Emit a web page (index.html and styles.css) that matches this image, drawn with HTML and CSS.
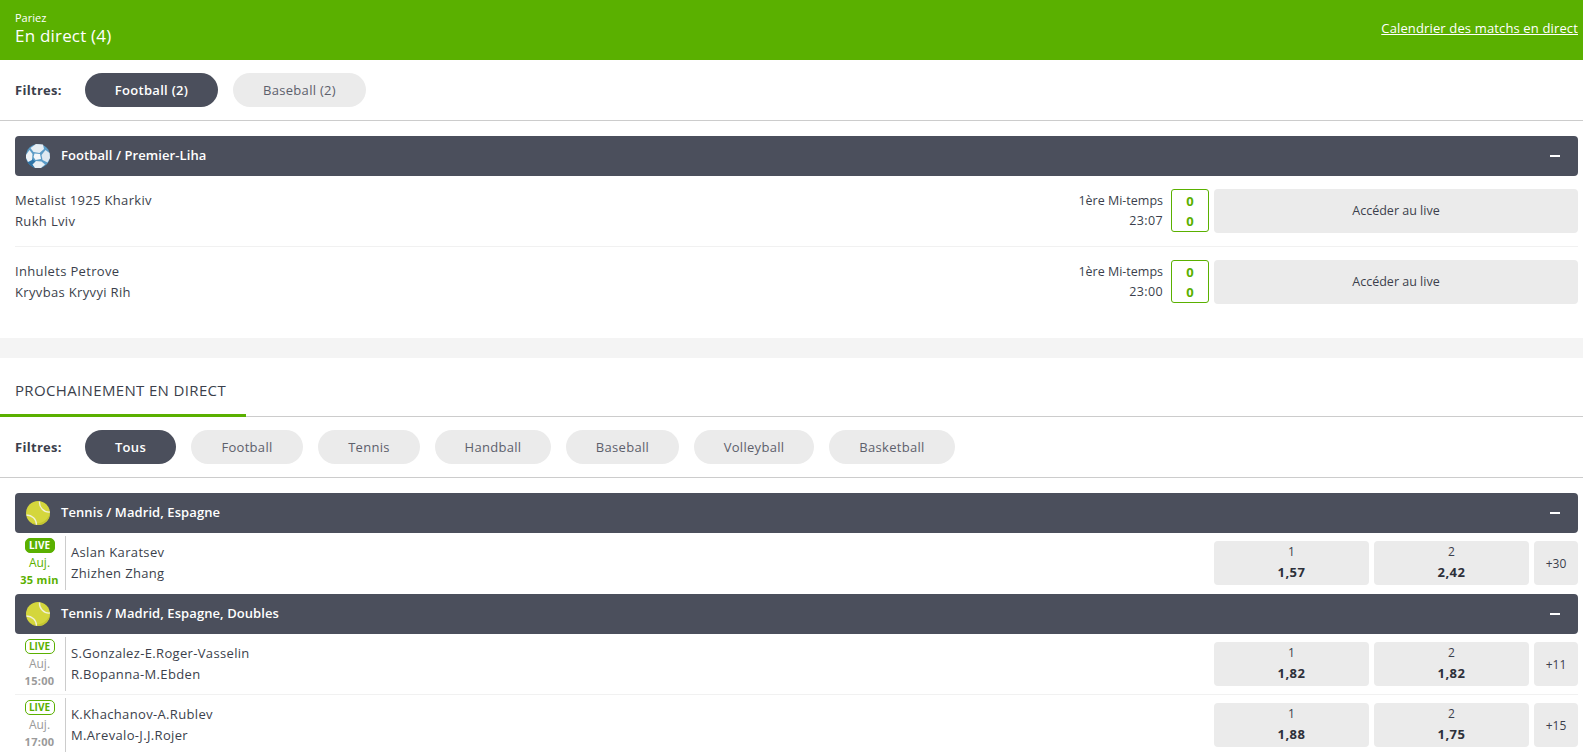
FILE: index.html
```html
<!DOCTYPE html>
<html lang="fr">
<head>
    <meta charset="UTF-8">
    <meta name="viewport" content="width=device-width, initial-scale=1.0">
    <title>Pariez en direct</title>
    <link rel="stylesheet" href="styles.css">
</head>
<body>
    <svg class="defs" width="0" height="0">
        <symbol id="ball-foot" viewBox="0 0 24 24">
            <circle cx="12" cy="12" r="12" fill="#5a9bc6"/>
            <path d="M0 12A12 12 0 0 0 12 24L17 23 6 15Z" fill="#2f75a8"/>
            <path d="M4.500 4 10 0.100 17 0.500 18 5 13.500 9 7.500 8Z" fill="#e6eef4"/>
            <path d="M0 11 3.500 6 6.500 10 6 16 2 18 0 14Z" fill="#eef3f7"/>
            <path d="M15.500 11 19.500 6 23.500 9 24 14 21.500 18.500 16.500 16Z" fill="#dfe9f1"/>
            <path d="M6.500 20.500 10 17 15.500 17.500 19 20.500 15 24 9 24Z" fill="#e8eff4"/>
            <path d="M8.500 9.500 14 10 15 15 9.500 16 7.500 13Z" fill="#f4f7fa"/>
        </symbol>
        <symbol id="ball-tennis" viewBox="0 0 24 24">
            <circle cx="12" cy="12" r="12" fill="#d4d63c"/>
            <path d="M12 24A12 12 0 0 0 24 12 14 14 0 0 1 4 21 12 12 0 0 0 12 24Z" fill="#c3c532"/>
            <path d="M13.500 0.500C13 6 17.500 11.500 23.800 11" fill="none" stroke="#f1f1d8" stroke-width="1.300"/>
            <path d="M0.500 14C6 14 10.500 18 10.500 23.800" fill="none" stroke="#f1f1d8" stroke-width="1.300"/>
        </symbol>
    </svg>

    <div class="top-bar">
        <div>
            <div class="top-small">Pariez</div>
            <div class="top-title">En direct (4)</div>
        </div>
        <a class="top-link" href="#">Calendrier des matchs en direct</a>
    </div>

    <div class="filters">
        <span class="filters-label">Filtres:</span>
        <button class="pill active w133">Football (2)</button>
        <button class="pill w133">Baseball (2)</button>
    </div>

    <div class="section">
        <div class="league">
            <svg class="league-icon"><use href="#ball-foot"/></svg>
            <span class="league-name">Football / Premier-Liha</span>
            <span class="collapse"></span>
        </div>
        <div class="live-row">
            <div class="names">
                <div>Metalist 1925 Kharkiv</div>
                <div>Rukh Lviv</div>
            </div>
            <div class="status">
                <div>1ère Mi-temps</div>
                <div class="clock">23:07</div>
            </div>
            <div class="score"><div>0</div><div>0</div></div>
            <button class="go-live">Accéder au live</button>
        </div>
        <div class="live-row">
            <div class="names">
                <div>Inhulets Petrove</div>
                <div>Kryvbas Kryvyi Rih</div>
            </div>
            <div class="status">
                <div>1ère Mi-temps</div>
                <div class="clock">23:00</div>
            </div>
            <div class="score"><div>0</div><div>0</div></div>
            <button class="go-live">Accéder au live</button>
        </div>
    </div>

    <div class="band"></div>

    <div class="tabs">
        <div class="tab">PROCHAINEMENT EN DIRECT</div>
    </div>

    <div class="filters">
        <span class="filters-label">Filtres:</span>
        <button class="pill active w91">Tous</button>
        <button class="pill w112">Football</button>
        <button class="pill w102">Tennis</button>
        <button class="pill w116">Handball</button>
        <button class="pill w113">Baseball</button>
        <button class="pill w120">Volleyball</button>
        <button class="pill w126">Basketball</button>
    </div>

    <div class="section">
        <div class="league">
            <svg class="league-icon"><use href="#ball-tennis"/></svg>
            <span class="league-name">Tennis / Madrid, Espagne</span>
            <span class="collapse"></span>
        </div>
        <div class="event-row">
            <div class="when now">
                <span class="live-tag filled">LIVE</span>
                <div class="when-day">Auj.</div>
                <div class="when-time">35 min</div>
            </div>
            <div class="names event-names">
                <div>Aslan Karatsev</div>
                <div>Zhizhen Zhang</div>
            </div>
            <button class="odd"><span>1</span><b>1,57</b></button>
            <button class="odd"><span>2</span><b>2,42</b></button>
            <button class="more">+30</button>
        </div>

        <div class="league">
            <svg class="league-icon"><use href="#ball-tennis"/></svg>
            <span class="league-name">Tennis / Madrid, Espagne, Doubles</span>
            <span class="collapse"></span>
        </div>
        <div class="event-row">
            <div class="when">
                <span class="live-tag">LIVE</span>
                <div class="when-day">Auj.</div>
                <div class="when-time">15:00</div>
            </div>
            <div class="names event-names">
                <div>S.Gonzalez-E.Roger-Vasselin</div>
                <div>R.Bopanna-M.Ebden</div>
            </div>
            <button class="odd"><span>1</span><b>1,82</b></button>
            <button class="odd"><span>2</span><b>1,82</b></button>
            <button class="more">+11</button>
        </div>
        <div class="event-row">
            <div class="when">
                <span class="live-tag">LIVE</span>
                <div class="when-day">Auj.</div>
                <div class="when-time">17:00</div>
            </div>
            <div class="names event-names">
                <div>K.Khachanov-A.Rublev</div>
                <div>M.Arevalo-J.J.Rojer</div>
            </div>
            <button class="odd"><span>1</span><b>1,88</b></button>
            <button class="odd"><span>2</span><b>1,75</b></button>
            <button class="more">+15</button>
        </div>
    </div>
</body>
</html>
```

FILE: styles.css
```css
html, body {
    height: 754px;
    overflow: hidden;
}
body {
    margin: 0;
    background-color: #fff;
    color: #3b3f4c;
    font-family: "Open Sans", Arial, sans-serif;
    font-size: 13px;
}
button {
    font-family: inherit;
    border: none;
    padding: 0;
    cursor: pointer;
}
.defs {
    position: absolute;
}
.top-bar {
    height: 60px;
    box-sizing: border-box;
    padding: 11px 5px 0 15px;
    display: flex;
    justify-content: space-between;
    background-color: #5ab000;
    color: #fff;
}
.top-small {
    font-size: 11px;
    line-height: 14px;
}
.top-title {
    font-size: 17px;
    letter-spacing: 0.2px;
    line-height: 22px;
}
.top-link {
    color: #fff;
    font-weight: 500;
    font-size: 13px;
    letter-spacing: 0.14px;
    line-height: 34px;
}
.filters {
    height: 61px;
    box-sizing: border-box;
    padding-left: 15px;
    display: flex;
    align-items: center;
    gap: 15px;
    border-bottom: 1px solid #ccc;
}
.filters-label {
    width: 55px;
    font-weight: 700;
    font-size: 13px;
    letter-spacing: 0.3px;
}
.pill {
    height: 34px;
    border-radius: 17px;
    background-color: #ebebeb;
    color: #5d606b;
    font-size: 13px;
    letter-spacing: 0.3px;
}
.pill.active {
    background-color: #4b4f5c;
    color: #fff;
    font-weight: 600;
}
.w133 { width: 133px; }
.w91 { width: 91px; }
.w112 { width: 112px; }
.w102 { width: 102px; }
.w116 { width: 116px; }
.w113 { width: 113px; }
.w120 { width: 120px; }
.w126 { width: 126px; }
.section {
    margin: 15px 5px 0 15px;
}
.league {
    height: 40px;
    box-sizing: border-box;
    padding: 0 18px 0 11px;
    display: flex;
    align-items: center;
    border-radius: 4px;
    background-color: #4b4f5c;
    color: #fff;
}
.league-icon {
    width: 24px;
    height: 24px;
}
.league-name {
    margin: 0 0 2px 11px;
    flex: 1;
    font-weight: 600;
    font-size: 13px;
    letter-spacing: 0.08px;
}
.collapse {
    width: 10px;
    height: 2px;
    background-color: #fff;
}
.live-row {
    height: 71px;
    box-sizing: border-box;
    padding-top: 13px;
    display: flex;
    align-items: flex-start;
    border-bottom: 1px solid #f1f1f1;
}
.live-row:last-child {
    border-bottom: none;
    height: 91px;
}
.names {
    flex: 1;
    line-height: 21px;
    padding-top: 1px;
    letter-spacing: 0.34px;
}
.status {
    text-align: right;
    line-height: 20px;
    padding-top: 2px;
    margin-right: 8px;
    font-size: 12.500px;
}
.clock {
    letter-spacing: 0.4px;
}
.score {
    width: 38px;
    height: 43px;
    box-sizing: border-box;
    margin-right: 5px;
    border: 1px solid #5ab000;
    border-radius: 3px;
    color: #5ab000;
    font-weight: 700;
    text-align: center;
    line-height: 20px;
    padding-top: 1px;
}
.go-live {
    width: 364px;
    height: 44px;
    padding-bottom: 2px;
    border-radius: 4px;
    background-color: #ebebeb;
    color: #3b3f4c;
    font-size: 12.500px;
}
.band {
    height: 20px;
    background-color: #f4f4f4;
}
.tabs {
    height: 59px;
    box-sizing: border-box;
    border-bottom: 1px solid #ccc;
}
.tab {
    width: 246px;
    height: 59px;
    box-sizing: border-box;
    padding: 22px 0 0 15px;
    border-bottom: 3px solid #5ab000;
    font-size: 15px;
    letter-spacing: 0.35px;
    line-height: 20px;
}
.event-row {
    height: 61px;
    box-sizing: border-box;
    padding-top: 3px;
    display: flex;
    align-items: flex-start;
    border-bottom: 1px solid #f1f1f1;
}
.event-row:last-child,
.event-row:has(+ .league) {
    border-bottom: none;
}
.when {
    width: 51px;
    height: 54px;
    box-sizing: border-box;
    padding: 2px 1px 0 0;
    border-right: 1px solid #ccc;
    color: #9a9a9a;
    font-size: 12px;
    text-align: center;
}
.when.now {
    color: #5ab000;
}
.live-tag {
    display: block;
    width: 30px;
    height: 15px;
    box-sizing: border-box;
    margin: 0 auto;
    border: 1px solid #5ab000;
    border-radius: 5px;
    color: #5ab000;
    font-size: 10px;
    font-weight: 700;
    line-height: 13px;
    text-align: center;
}
.live-tag.filled {
    background-color: #5ab000;
    color: #fff;
}
.when-day {
    margin-top: 1px;
    line-height: 17px;
}
.when-time {
    font-size: 11px;
    letter-spacing: 0.3px;
    line-height: 18px;
    font-weight: 700;
}
.event-names {
    height: 54px;
    box-sizing: border-box;
    padding: 6px 0 0 5px;
}
.odd {
    width: 155px;
    height: 44px;
    margin: 5px 5px 0 0;
    display: flex;
    flex-direction: column;
    align-items: center;
    border-radius: 4px;
    background-color: #ebebeb;
    color: #3b3f4c;
    font-size: 12px;
    line-height: 21px;
}
.odd b {
    font-size: 13px;
    letter-spacing: 0.5px;
    color: #2d303a;
}
.more {
    width: 44px;
    height: 44px;
    margin-top: 5px;
    border-radius: 4px;
    background-color: #ebebeb;
    color: #3b3f4c;
    font-size: 12px;
}
```
